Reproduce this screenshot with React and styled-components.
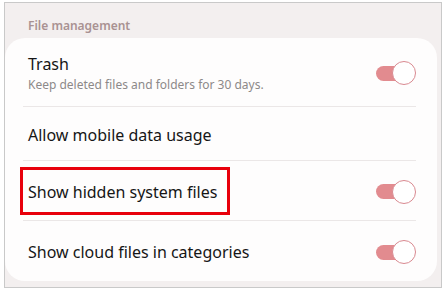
import styled, { createGlobalStyle } from "styled-components";

const settings = [
  {
    id: "trash",
    title: "Trash",
    description: "Keep deleted files and folders for 30 days.",
    toggle: true,
    height: 69,
  },
  { id: "mobile", title: "Allow mobile data usage", toggle: false, height: 54 },
  {
    id: "hidden",
    title: "Show hidden system files",
    toggle: true,
    height: 60,
    highlight: true,
  },
  { id: "cloud", title: "Show cloud files in categories", toggle: true },
];

function App() {
  return (
    <>
      <GlobalStyle />
      <StFrame>
        <StHeader>File management</StHeader>
        <StCard>
          {settings.map((item, index) => (
            <StRow key={item.id} $height={item.height} $last={index === settings.length - 1}>
              <StInfo>
                <StTitle>{item.title}</StTitle>
                {item.description && <StDescription>{item.description}</StDescription>}
              </StInfo>
              {item.toggle && (
                <StSwitch>
                  <StThumb />
                </StSwitch>
              )}
              {item.highlight && <StHighlight />}
            </StRow>
          ))}
        </StCard>
      </StFrame>
    </>
  );
}

export default App;

const GlobalStyle = createGlobalStyle`
  body {
    margin: 0;
    background: #ffffff;
    font-family: "Noto Sans", "Open Sans", sans-serif;
  }
`;

const StFrame = styled.div`
  box-sizing: border-box;
  margin: 2px 0 0 4px;
  width: 438px;
  height: 286px;
  border: 1px solid #c9c9c9;
  background: #f3efef;
  display: flex;
  flex-direction: column;
  padding: 0 4px 6px 0;
`;

const StHeader = styled.div`
  flex-shrink: 0;
  height: 35px;
  box-sizing: border-box;
  padding: 14px 0 0 23px;
  font-size: 12px;
  font-weight: 600;
  color: #a99292;
  line-height: 18px;
`;

const StCard = styled.div`
  flex: 1;
  background: #fefdfd;
  border-radius: 20px;
  padding: 0 21px 0 23px;
  display: flex;
  flex-direction: column;
`;

const StRow = styled.div`
  position: relative;
  box-sizing: border-box;
  flex: ${({ $height }) => ($height ? `0 0 ${$height}px` : "1")};
  display: flex;
  align-items: center;
  border-bottom: ${({ $last }) => ($last ? "none" : "1px solid #ebe7e7")};
  margin-left: -5px;
  padding: 2px 0 0 5px;
`;

const StInfo = styled.div`
  flex: 1;
  display: flex;
  flex-direction: column;
`;

const StTitle = styled.span`
  font-size: 16px;
  color: #161616;
  line-height: 20px;
`;

const StDescription = styled.span`
  margin-top: 3px;
  font-size: 12px;
  color: #8d8989;
  line-height: 16px;
`;

const StSwitch = styled.div`
  position: relative;
  width: 40px;
  height: 24px;
  display: flex;
  align-items: center;

  &::before {
    content: "";
    width: 30px;
    height: 15px;
    border-radius: 8px;
    background: #e28b8f;
  }
`;

const StThumb = styled.div`
  position: absolute;
  right: 0;
  top: 0;
  box-sizing: border-box;
  width: 24px;
  height: 24px;
  border-radius: 50%;
  background: #ffffff;
  border: 1.5px solid #d98990;
`;

const StHighlight = styled.div`
  position: absolute;
  left: -3px;
  top: 6px;
  width: 210px;
  height: 48px;
  box-sizing: border-box;
  border: 3px solid #e8000b;
`;
